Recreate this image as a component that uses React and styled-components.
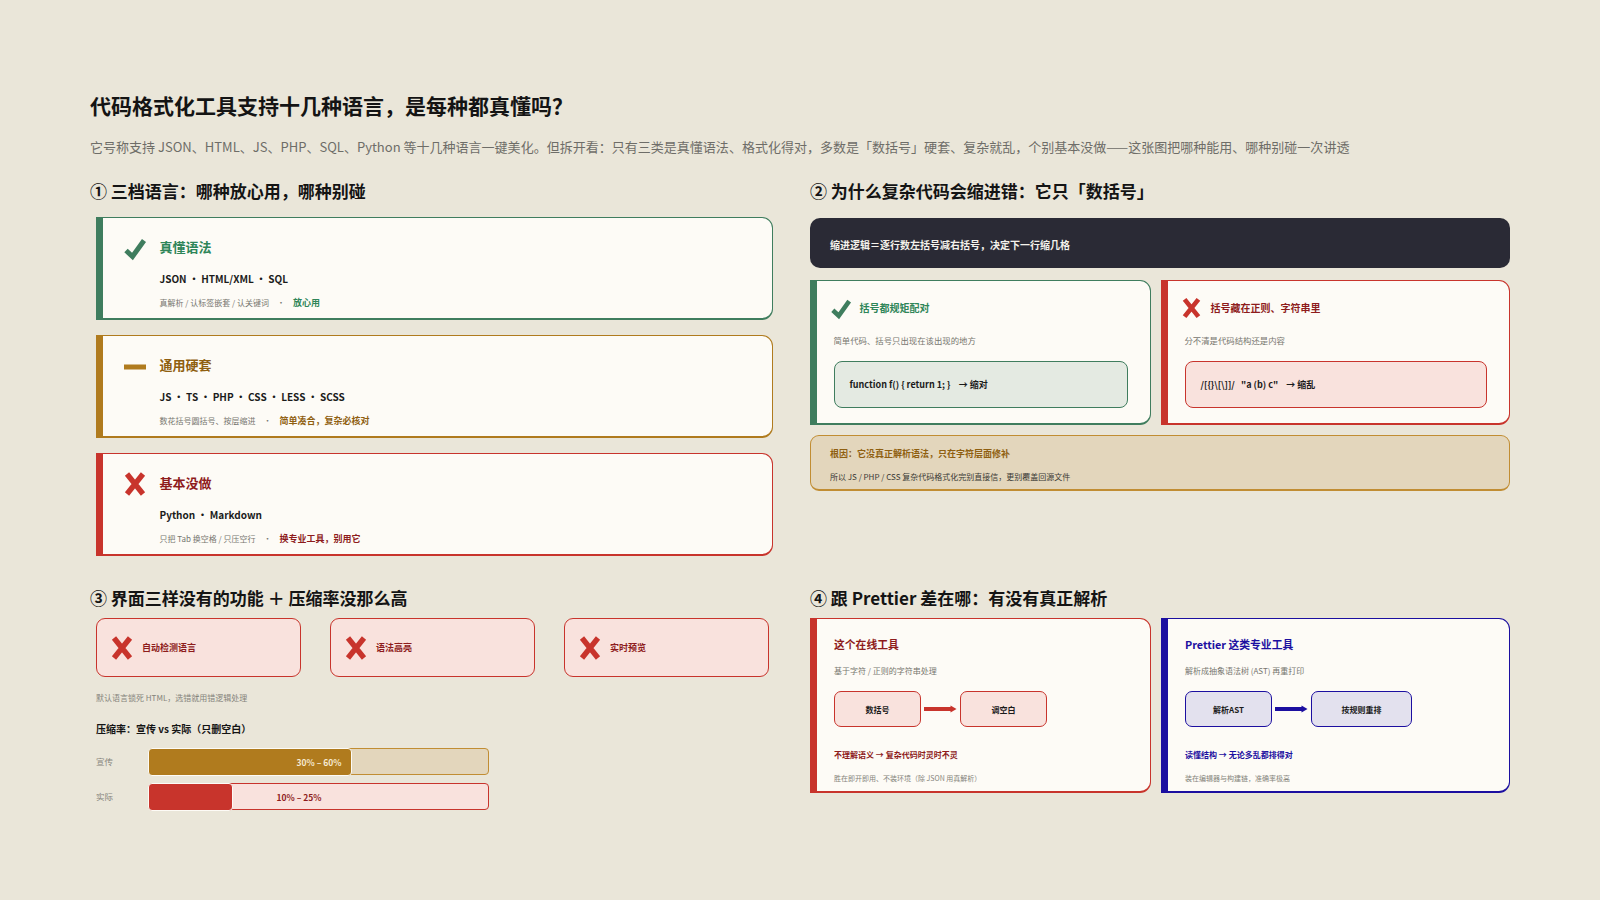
import React from "react";
import styled, { createGlobalStyle } from "styled-components";

const Global = createGlobalStyle`
  html, body { margin: 0; padding: 0; background: #eae6d9; }
  * { box-sizing: border-box; }
  body { font-family: "Noto Sans CJK SC", "Noto Sans", sans-serif; }
`;

const C = {
  green: "#3f7d5e", greenText: "#2e8558",
  amber: "#b07b1e", amberText: "#8f5f10",
  red: "#c8342c", redText: "#8e1c1c",
  blue: "#1c0fa0", blueText: "#1c0fa0",
  paleRed: "#f9e2dd",
};

const Page = styled.div`
  width: 1600px; height: 900px; background: #eae6d9; padding: 91px 90px 0; overflow: hidden;
`;
const Title = styled.h1`
  margin: 0; font-size: 21px; line-height: 28px; font-weight: 700; color: #141414;
`;
const Sub = styled.p`
  margin: 16px 0 0; font-size: 13.03px; line-height: 24px; color: #6e6d68; white-space: nowrap;
`;
const Board = styled.div`
  display: grid; grid-template-columns: 700px 700px; column-gap: 20px; margin-top: 19px;
`;
const Column = styled.section`
  display: flex; flex-direction: column; height: ${p => p.$h}px;
`;
const Head = styled.h2`
  margin: 0; font-size: 17px; line-height: 26px; font-weight: 700; color: #141414; white-space: nowrap;
`;
const Tiers = styled.div`
  display: flex; flex-direction: column; gap: 15px; margin: 13px 0 0 6.5px; width: 676px;
`;
const Barred = styled.div`
  position: relative; background: #fdfbf6; border: 1.5px solid ${p => p.$c}; border-bottom-width: 2px; border-radius: 0 11px 11px 0;
  &::before { content: ""; position: absolute; left: -1.5px; top: -1.5px; bottom: -2px; width: 7px; background: ${p => p.$c}; }
`;
const Tier = styled(Barred)`
  height: 103px; padding: 18.5px 0 0 26px; display: flex; gap: 14px;
`;
const TierBody = styled.div`
  display: flex; flex-direction: column;
`;
const TierName = styled.div`
  font-size: 13px; line-height: 20px; font-weight: 700; color: ${p => p.$c};
`;
const Langs = styled.div`
  margin-top: 12px; font-size: 10px; line-height: 20px; font-weight: 700; color: #1b1b1b; white-space: nowrap;
`;
const Fine = styled.div`
  margin-top: ${p => p.$mt ?? 7}px; font-size: ${p => p.$fs ?? 8}px; line-height: 14px; color: ${p => p.$color ?? "#77766f"}; white-space: nowrap;
`;
const Strong = styled.span`
  font-weight: 700; color: ${p => p.$c}; font-size: 9px;
`;
const Dot = styled.span`
  margin: 0 8px;
`;
const IconBox = styled.svg`
  flex: none; width: ${p => p.$w ?? 22}px; height: ${p => p.$h ?? 24}px; margin-top: ${p => p.$mt ?? 0}px; display: block; overflow: visible;
`;
const Check = ({ w, h, mt }) => (
  <IconBox $w={w} $h={h} $mt={mt} viewBox="0 0 22 24"><path d="M2 14.5 L8.5 20.5 L20 4.5" fill="none" stroke={C.green} strokeWidth="5" /></IconBox>
);
const Cross = ({ w, h, mt }) => (
  <IconBox $w={w} $h={h} $mt={mt} viewBox="0 0 22 24"><path d="M3 2 L19 22 M19 2 L3 22" fill="none" stroke={C.red} strokeWidth="5.4" /></IconBox>
);
const Dash = () => (
  <IconBox viewBox="0 0 22 24"><rect x="0" y="9.5" width="22" height="5" fill={C.amber} /></IconBox>
);

const Dark = styled.div`
  height: 50px; margin-top: 14px; background: #2a2a35; border-radius: 10px; color: #f4f2ec;
  font-size: 10px; font-weight: 700; line-height: 50px; padding: 2px 0 0 20px;
`;
const Pair = styled.div`
  display: grid; grid-template-columns: 341px 349px; column-gap: 10px; margin-top: ${p => p.$mt}px;
`;
const Why = styled(Barred)`
  height: 145px; padding: 14px 22px 0 22.5px;
`;
const WhyHead = styled.div`
  display: flex; align-items: center; margin-left: ${p => p.$ml}px; gap: ${p => p.$gap}px;
`;
const WhyName = styled.div`
  font-size: 10px; font-weight: 700; line-height: 26px; color: ${p => p.$c};
`;
const Code = styled.div`
  margin-top: 14px; height: 47px; border: 1.5px solid ${p => p.$c}; border-radius: 8px; background: ${p => p.$bg};
  font-size: 9px; font-weight: 700; line-height: 46px; padding-left: 15px; color: #1b1b1b; white-space: pre;
`;
const Root = styled.div`
  margin-top: 10px; height: 56px; background: #e3d6bc; border: 1.5px solid #c18d33; border-bottom-width: 2px; border-radius: 9px; padding: 8px 19px;
`;
const RootTop = styled.div`
  font-size: 9px; font-weight: 700; line-height: 20px; color: ${C.amberText};
`;
const RootBot = styled.div`
  margin-top: 5px; font-size: 8px; line-height: 16px; color: #3a3934;
`;
const Features = styled.div`
  display: flex; gap: 29px; margin: 7px 0 0 6px;
`;
const Feature = styled.div`
  width: 205px; height: 59px; background: ${C.paleRed}; border: 1.5px solid ${C.red}; border-radius: 9px;
  display: flex; align-items: center; gap: 9px; padding-left: 14px;
`;
const FeatureName = styled.div`
  font-size: 9px; font-weight: 700; color: ${C.redText};
`;
const Note = styled(Fine)`
  margin: 14px 0 0 6px; color: #85847b;
`;
const Ratio = styled.div`
  margin: 14px 0 0 6px; font-size: 10px; line-height: 20px; font-weight: 700; color: #141414;
`;
const BarRow = styled.div`
  display: flex; align-items: center; margin: ${p => p.$mt}px 0 0 6px;
  font-size: 8.5px; color: #85847b;
`;
const BarLabel = styled.div`
  width: 52.5px; padding-bottom: 2px;
`;
const Track = styled.div`
  position: relative; width: 340.5px; height: 27px; border: 1.5px solid ${p => p.$c}; border-radius: 4px; background: ${p => p.$bg};
`;
const Fill = styled.div`
  position: absolute; left: -1.5px; top: -1.5px; bottom: -1.5px; background: ${p => p.$c}; border: 1px solid #fdfbf6; border-radius: 4px;
`;
const BarText = styled.div`
  position: absolute; top: 0; bottom: 0; left: ${p => p.$x}px; display: flex; align-items: center;
  font-size: 8.5px; font-weight: 700; color: ${p => p.$c}; white-space: nowrap;
`;
const Compare = styled(Barred)`
  height: 175px; padding: 12px 21px 0 23px;
`;
const CompareName = styled.div`
  font-size: 10.8px; font-weight: 700; line-height: 26px; color: ${p => p.$c};
`;
const Chain = styled.div`
  display: flex; align-items: center; margin-top: 13px;
`;
const Node = styled.div`
  width: ${p => p.$w}px; height: 36px; border: 1.5px solid ${p => p.$c}; border-radius: 7px; background: ${p => p.$bg};
  font-size: 8px; font-weight: 700; color: #1b1b1b; display: flex; align-items: center; justify-content: center;
`;
const ArrowBox = styled.svg`
  flex: none; width: 39px; height: 14px; display: block;
`;
const Arrow = ({ c }) => (
  <ArrowBox viewBox="0 0 39 14"><rect x="3" y="5" width="27" height="4" fill={c} /><path d="M29.5 3.5 L35.5 7 L29.5 10.5 Z" fill={c} /></ArrowBox>
);
const Verdict = styled.div`
  margin-top: 18px; font-size: 8px; font-weight: 700; line-height: 20px; color: ${p => p.$c};
`;

const tiers = [
  { c: C.green, t: C.greenText, I: Check, name: "真懂语法", langs: "JSON · HTML/XML · SQL", fine: "真解析 / 认标签嵌套 / 认关键词", tag: "放心用" },
  { c: C.amber, t: C.amberText, I: Dash, name: "通用硬套", langs: "JS · TS · PHP · CSS · LESS · SCSS", fine: "数花括号圆括号、按层缩进", tag: "简单凑合，复杂必核对" },
  { c: C.red, t: C.redText, I: Cross, name: "基本没做", langs: "Python · Markdown", fine: "只把 Tab 换空格 / 只压空行", tag: "换专业工具，别用它" },
];

export default function App() {
  return (
    <Page>
      <Global />
      <Title>代码格式化工具支持十几种语言，是每种都真懂吗？</Title>
      <Sub>它号称支持 JSON、HTML、JS、PHP、SQL、Python 等十几种语言一键美化。但拆开看：只有三类是真懂语法、格式化得对，多数是「数括号」硬套、复杂就乱，个别基本没做——这张图把哪种能用、哪种别碰一次讲透</Sub>
      <Board>
        <Column $h={407}>
          <Head>① 三档语言：哪种放心用，哪种别碰</Head>
          <Tiers>
            {tiers.map(({ c, t, I, name, langs, fine, tag }) => (
              <Tier key={name} $c={c}>
                <I mt={-1} />
                <TierBody>
                  <TierName $c={t}>{name}</TierName>
                  <Langs>{langs}</Langs>
                  <Fine>{fine}<Dot>·</Dot><Strong $c={t}>{tag}</Strong></Fine>
                </TierBody>
              </Tier>
            ))}
          </Tiers>
        </Column>
        <Column $h={407}>
          <Head>② 为什么复杂代码会缩进错：它只「数括号」</Head>
          <Dark>缩进逻辑＝逐行数左括号减右括号，决定下一行缩几格</Dark>
          <Pair $mt={12}>
            <Why $c={C.green}>
              <WhyHead $ml={-3} $gap={9}><Check w={20} h={22} /><WhyName $c={C.greenText}>括号都规矩配对</WhyName></WhyHead>
              <Fine $mt={12} $fs={8.4}>简单代码、括号只出现在该出现的地方</Fine>
              <Code $c={C.green} $bg="#e4eae2">{"function f() { return 1; }    → 缩对"}</Code>
            </Why>
            <Why $c={C.red}>
              <WhyHead $ml={-3} $gap={10}><Cross w={19} h={22} /><WhyName $c={C.redText}>括号藏在正则、字符串里</WhyName></WhyHead>
              <Fine $mt={12} $fs={8.4}>分不清是代码结构还是内容</Fine>
              <Code $c={C.red} $bg={C.paleRed}>{"/[{}\\[\\]]/   \"a (b) c\"    → 缩乱"}</Code>
            </Why>
          </Pair>
          <Root>
            <RootTop>根因：它没真正解析语法，只在字符层面修补</RootTop>
            <RootBot>所以 JS / PHP / CSS 复杂代码格式化完别直接信，更别覆盖回源文件</RootBot>
          </Root>
        </Column>
        <Column $h={260}>
          <Head>③ 界面三样没有的功能 ＋ 压缩率没那么高</Head>
          <Features>
            {["自动检测语言", "语法高亮", "实时预览"].map(n => (
              <Feature key={n}><Cross /><FeatureName>{n}</FeatureName></Feature>
            ))}
          </Features>
          <Note>默认语言锁死 HTML，选错就用错逻辑处理</Note>
          <Ratio>压缩率：宣传 vs 实际（只删空白）</Ratio>
          <BarRow $mt={9}>
            <BarLabel>宣传</BarLabel>
            <Track $c="#c18d33" $bg="#e3d6bc">
              <Fill $c={C.amber} style={{ width: "60.3%" }} />
              <BarText $x={147} $c="#f6ead2">30% – 60%</BarText>
            </Track>
          </BarRow>
          <BarRow $mt={8}>
            <BarLabel>实际</BarLabel>
            <Track $c={C.red} $bg={C.paleRed}>
              <Fill $c={C.red} style={{ width: "25%" }} />
              <BarText $x={127} $c={C.redText}>10% – 25%</BarText>
            </Track>
          </BarRow>
        </Column>
        <Column $h={260}>
          <Head>④ 跟 Prettier 差在哪：有没有真正解析</Head>
          <Pair $mt={7}>
            <Compare $c={C.red}>
              <CompareName $c={C.redText}>这个在线工具</CompareName>
              <Fine $mt={7}>基于字符 / 正则的字符串处理</Fine>
              <Chain>
                <Node $w={87} $c={C.red} $bg={C.paleRed}>数括号</Node>
                <Arrow c={C.red} />
                <Node $w={87} $c={C.red} $bg={C.paleRed}>调空白</Node>
              </Chain>
              <Verdict $c={C.redText}>不理解语义 → 复杂代码时灵时不灵</Verdict>
              <Fine $mt={6} $fs={7} $color="#85847b">胜在即开即用、不装环境（除 JSON 用真解析）</Fine>
            </Compare>
            <Compare $c={C.blue}>
              <CompareName $c={C.blueText}>Prettier 这类专业工具</CompareName>
              <Fine $mt={7}>解析成抽象语法树 (AST) 再重打印</Fine>
              <Chain>
                <Node $w={87} $c={C.blue} $bg="#e3e1ee">解析AST</Node>
                <Arrow c={C.blue} />
                <Node $w={101} $c={C.blue} $bg="#e3e1ee">按规则重排</Node>
              </Chain>
              <Verdict $c={C.blueText}>读懂结构 → 无论多乱都排得对</Verdict>
              <Fine $mt={6} $fs={7} $color="#85847b">装在编辑器与构建链，准确率极高</Fine>
            </Compare>
          </Pair>
        </Column>
      </Board>
    </Page>
  );
}
